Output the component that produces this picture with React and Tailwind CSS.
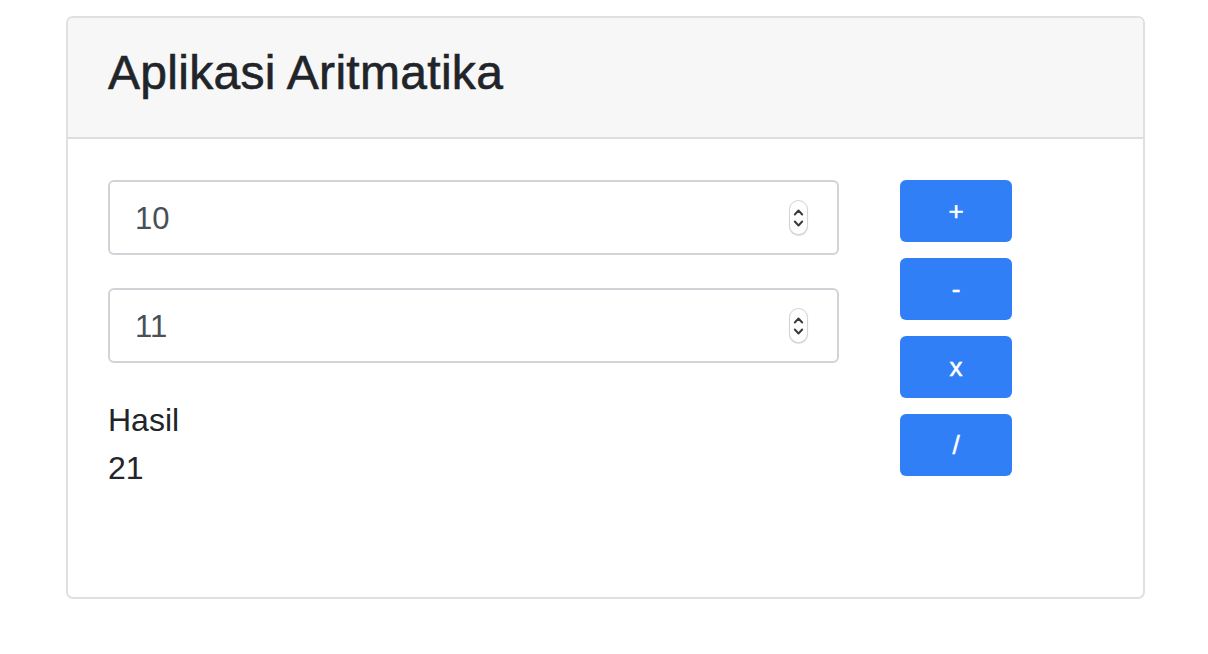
import { useState } from "react";

function Spinner() {
  return (
    <div className="flex h-[35px] w-[19px] flex-col items-center justify-center rounded-full border border-[#d4d4d4] bg-white shadow-[0_1px_1px_rgba(0,0,0,0.15)]">
      <svg width="11" height="26" viewBox="0 0 11 26" fill="none" stroke="#3a3a3a" strokeWidth="1.9" strokeLinecap="round" strokeLinejoin="round">
        <path d="M1.8 9.5 L5.5 5.5 L9.2 9.5" />
        <path d="M1.8 16.5 L5.5 20.5 L9.2 16.5" />
      </svg>
    </div>
  );
}

function NumberField({ value, onChange }) {
  return (
    <div className="flex h-[75px] w-[731px] items-center rounded-[6px] border-2 border-[#d0d3d7] bg-white pl-[25px] pr-[29px]">
      <input
        type="number"
        value={value}
        onChange={(e) => onChange(e.target.value)}
        className="min-w-0 flex-1 bg-transparent pt-[4px] text-[31px] text-[#495057] outline-none [appearance:textfield] [&::-webkit-inner-spin-button]:appearance-none [&::-webkit-outer-spin-button]:appearance-none"
      />
      <Spinner />
    </div>
  );
}

export default function App() {
  const [a, setA] = useState("10");
  const [b, setB] = useState("11");
  const [hasil, setHasil] = useState(21);

  const hitung = (op) => {
    const x = Number(a);
    const y = Number(b);
    if (op === "+") setHasil(x + y);
    if (op === "-") setHasil(x - y);
    if (op === "x") setHasil(x * y);
    if (op === "/") setHasil(x / y);
  };

  return (
    <div className="min-h-screen bg-white pt-[16px] pl-[66px] pr-[63px] font-['Liberation_Sans',Arial,sans-serif] text-[#212529]">
      <div className="overflow-hidden rounded-[7px] border-2 border-[#e0e0e0]">
        {/* Header */}
        <div className="h-[121px] border-b-2 border-[#dedede] bg-[#f7f7f7] pl-[40px] pt-[26px]">
          <h3 className="text-[48px] leading-[57px] tracking-[0.3px] [-webkit-text-stroke:0.6px_#212529]">
            Aplikasi Aritmatika
          </h3>
        </div>

        {/* Body */}
        <div className="flex h-[458px] gap-[61px] px-[40px] pt-[41px]">
          <div className="flex flex-col">
            <NumberField value={a} onChange={setA} />
            <div className="mt-[33px]">
              <NumberField value={b} onChange={setB} />
            </div>
            <div className="mt-[33px] text-[32px] leading-[48px]">
              <div>Hasil</div>
              <div>{hasil}</div>
            </div>
          </div>

          <div className="flex flex-col gap-[16px]">
            {["+", "-", "x", "/"].map((op) => (
              <button
                key={op}
                onClick={() => hitung(op)}
                className="h-[62px] w-[112px] rounded-[6px] bg-[#317ff6] text-[26px] text-white [-webkit-text-stroke:0.5px_#ffffff]"
              >
                {op}
              </button>
            ))}
          </div>
        </div>
      </div>
    </div>
  );
}
